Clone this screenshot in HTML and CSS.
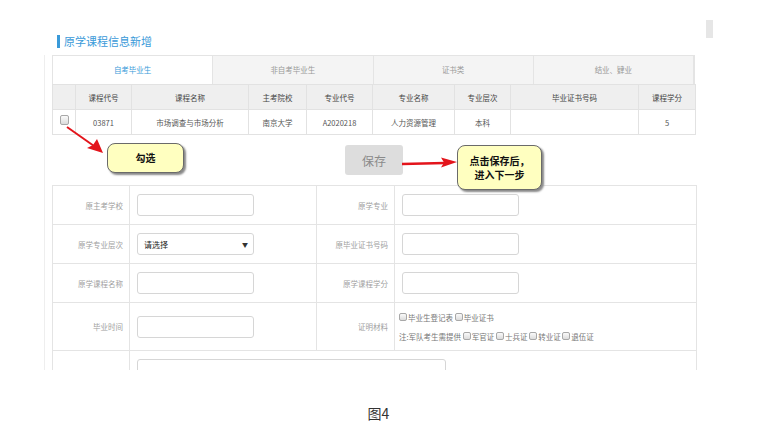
FILE: index.html
```html
<!DOCTYPE html>
<html>

<head>
    <meta charset="utf-8">
    <meta name="viewport" content="width=device-width, initial-scale=1.0">
    <title>原学课程信息新增</title>
    <link rel="stylesheet" href="styles.css">
</head>

<body>
    <div class="shot">
        <div class="thumb"></div>
        <div class="panel">
            <h2 class="title">原学课程信息新增</h2>

            <div class="box">
                <ul class="tabs">
                    <li class="active">自考毕业生</li>
                    <li>非自考毕业生</li>
                    <li>证书类</li>
                    <li>结业、肄业</li>
                </ul>

                <table class="grid">
                    <colgroup>
                        <col style="width: 23px">
                        <col style="width: 56px">
                        <col style="width: 117px">
                        <col style="width: 58px">
                        <col style="width: 66px">
                        <col style="width: 82px">
                        <col style="width: 56px">
                        <col style="width: 128px">
                        <col style="width: 57px">
                    </colgroup>
                    <thead>
                        <tr>
                            <th></th>
                            <th>课程代号</th>
                            <th>课程名称</th>
                            <th>主考院校</th>
                            <th>专业代号</th>
                            <th>专业名称</th>
                            <th>专业层次</th>
                            <th>毕业证书号码</th>
                            <th>课程学分</th>
                        </tr>
                    </thead>
                    <tbody>
                        <tr>
                            <td><span class="check"></span></td>
                            <td>03871</td>
                            <td>市场调查与市场分析</td>
                            <td>南京大学</td>
                            <td>A2020218</td>
                            <td>人力资源管理</td>
                            <td>本科</td>
                            <td></td>
                            <td>5</td>
                        </tr>
                    </tbody>
                </table>

                <div class="actions">
                    <button class="save">保存</button>
                </div>

                <table class="form">
                    <colgroup>
                        <col style="width: 77px">
                        <col style="width: 187px">
                        <col style="width: 78px">
                        <col>
                    </colgroup>
                    <tr>
                        <td class="label">原主考学校</td>
                        <td><input class="field" type="text"></td>
                        <td class="label">原学专业</td>
                        <td><input class="field" type="text"></td>
                    </tr>
                    <tr>
                        <td class="label">原学专业层次</td>
                        <td><div class="field select"><span>请选择</span><span class="caret">&#9660;</span></div></td>
                        <td class="label">原毕业证书号码</td>
                        <td><input class="field" type="text"></td>
                    </tr>
                    <tr>
                        <td class="label">原学课程名称</td>
                        <td><input class="field" type="text"></td>
                        <td class="label">原学课程学分</td>
                        <td><input class="field" type="text"></td>
                    </tr>
                    <tr class="tall">
                        <td class="label">毕业时间</td>
                        <td><input class="field" type="text"></td>
                        <td class="label">证明材料</td>
                        <td class="proofs">
                            <div><span class="check small"></span>毕业生登记表 <span class="check small"></span>毕业证书</div>
                            <div>注:军队考生需提供 <span class="check small"></span>军官证 <span class="check small"></span>士兵证 <span class="check small"></span>转业证 <span class="check small"></span>退伍证</div>
                        </td>
                    </tr>
                    <tr class="last">
                        <td class="label"></td>
                        <td colspan="3"><div class="area"></div></td>
                    </tr>
                </table>

                <!-- tips drawn over the form -->
                <div class="tip tip-check">勾选</div>
                <div class="tip tip-save">点击保存后，<br>进入下一步</div>
                <svg class="arrows" width="660" height="320" viewBox="0 0 660 320">
                    <line x1="22" y1="72" x2="49" y2="91" stroke="#e3141b" stroke-width="2"/>
                    <polygon points="58,98 42,93 48,90 52,84" fill="#e3141b"/>
                    <line x1="357" y1="109" x2="400" y2="108" stroke="#e3141b" stroke-width="2.5"/>
                    <polygon points="412,107 396,112.5 399,107.5 396,102.5" fill="#e3141b"/>
                </svg>
            </div>
        </div>
    </div>

    <p class="caption">图4</p>
</body>
</html>
```

FILE: styles.css
```css
body {
    margin: 0;
    background-color: #ffffff;
    font-family: "Noto Sans CJK SC", "Liberation Sans", sans-serif;
    color: #333;
}

.shot {
    position: relative;
    width: 757px;
    height: 370px;
    overflow: hidden;
}

.thumb {
    position: absolute;
    left: 706px;
    top: 20px;
    width: 7px;
    height: 18px;
    background-color: #e6e6e6;
}

.panel {
    padding: 35px 0 0 44px;
}

.title {
    margin: 0 0 7px 13px;
    padding-left: 4px;
    border-left: 3px solid #3a9ad9;
    height: 13px;
    line-height: 13px;
    font-size: 11px;
    font-weight: normal;
    color: #3a9ad9;
}

.box {
    position: relative;
    width: 644px;
    padding-left: 7px;
    border-left: 1px solid #eeeeee;
}

.tabs {
    list-style-type: none;
    margin: 0;
    padding: 0;
    display: flex;
    width: 641px;
    height: 28px;
    border: 1px solid #e4e4e4;
    border-bottom: none;
    background-color: #f4f4f4;
}

.tabs li {
    width: 160px;
    line-height: 28px;
    text-align: center;
    font-size: 7.5px;
    color: #999;
    border-right: 1px solid #e4e4e4;
}

.tabs li.active {
    background-color: white;
    color: #3a9ad9;
}

.grid {
    width: 643px;
    border-collapse: collapse;
    table-layout: fixed;
}

.grid th, .grid td {
    height: 24px;
    padding: 0;
    border: 1px solid #e2e2e2;
    text-align: center;
    font-size: 7.5px;
    font-weight: normal;
}

.grid th {
    background-color: #efefef;
    color: #444;
}

.grid td {
    color: #555;
}

.check {
    display: inline-block;
    width: 7px;
    height: 8px;
    border: 1px solid #a8a8a8;
    border-radius: 2px;
    background: linear-gradient(#fafafa, #dcdcdc);
    vertical-align: middle;
}

.grid .check {
    margin: 0 0 4px 0;
}

.check.small {
    width: 6px;
    height: 6px;
    margin: 0 1px 2px 0;
}

.actions {
    display: flex;
    justify-content: center;
    padding: 10px 0;
}

.save {
    width: 58px;
    height: 30px;
    border: none;
    border-radius: 3px;
    background-color: #dddddd;
    color: #8a8a8a;
    font-family: inherit;
    font-size: 12px;
    padding: 0;
}

.form {
    width: 645px;
    border-collapse: collapse;
    table-layout: fixed;
}

.form td {
    height: 38px;
    padding: 0 0 0 7px;
    border: 1px solid #e4e4e4;
    font-size: 7.5px;
}

.form td.label {
    padding: 0 6px 0 0;
    text-align: right;
    color: #a0a0a0;
}

.form tr.tall td {
    height: 47px;
}

.form td.proofs {
    padding-left: 4px;
    color: #777;
    line-height: 19px;
}

.form tr.last td {
    height: 30px;
    vertical-align: top;
    border-bottom: none;
}

.field {
    display: block;
    box-sizing: border-box;
    width: 117px;
    height: 22px;
    margin: 0;
    border: 1px solid #d6d6d6;
    border-radius: 3px;
    background-color: white;
}

.select {
    display: flex;
    align-items: center;
    justify-content: space-between;
    padding: 0 5px 0 6px;
    color: #222;
    font-size: 8px;
}

.caret {
    font-size: 6px;
    color: #333;
}

.area {
    width: 307px;
    height: 40px;
    margin-top: 8px;
    border: 1px solid #d6d6d6;
    border-radius: 3px;
}

.tip {
    position: absolute;
    box-sizing: border-box;
    display: flex;
    align-items: center;
    justify-content: center;
    text-align: center;
    background-color: #ffffc0;
    border: 1px solid #6a6a6a;
    border-radius: 8px;
    box-shadow: 2px 2px 2px #8a8a8a;
    font-size: 10px;
    font-weight: bold;
    line-height: 14px;
    color: #111;
}

.tip-check {
    left: 62px;
    top: 88px;
    width: 77px;
    height: 30px;
}

.tip-save {
    left: 412px;
    top: 90px;
    width: 85px;
    height: 45px;
}

.arrows {
    position: absolute;
    left: 0;
    top: 0;
    pointer-events: none;
}

.caption {
    margin: 33px 0 0;
    text-align: center;
    font-size: 14px;
    line-height: 20px;
    color: #333;
}
```
